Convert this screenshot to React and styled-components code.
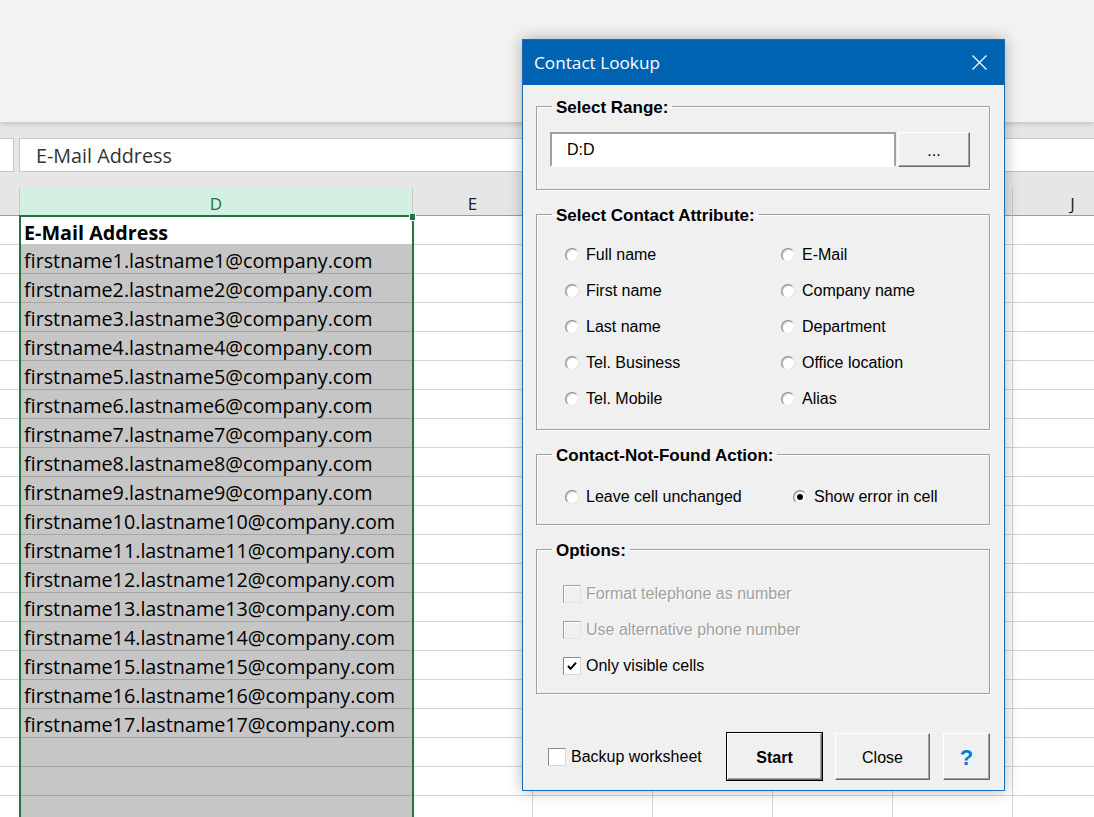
import React from 'react';
import styled, { createGlobalStyle } from 'styled-components';

const GlobalStyle = createGlobalStyle`
  html, body {
    margin: 0;
    padding: 0;
  }
  body {
    width: 1094px;
    height: 817px;
    overflow: hidden;
    background: #fff;
    font-family: "Open Sans", "Liberation Sans", sans-serif;
  }
  * {
    box-sizing: border-box;
  }
`;

const COLUMNS = [
  { key: 'C', width: 20, label: '' },
  { key: 'D', width: 393, label: 'D' },
  { key: 'E', width: 120, label: 'E' },
  { key: 'F', width: 120, label: 'F' },
  { key: 'G', width: 120, label: 'G' },
  { key: 'H', width: 120, label: 'H' },
  { key: 'I', width: 120, label: 'I' },
  { key: 'J', width: 120, label: 'J' },
];

const ROW_COUNT = 21;

const EMAILS = Array.from(
  { length: 17 },
  (_, i) => `firstname${i + 1}.lastname${i + 1}@company.com`
);

const ATTRIBUTES = [
  ['Full name', 'E-Mail'],
  ['First name', 'Company name'],
  ['Last name', 'Department'],
  ['Tel. Business', 'Office location'],
  ['Tel. Mobile', 'Alias'],
];

const OPTIONS = [
  { label: 'Format telephone as number', disabled: true, checked: false },
  { label: 'Use alternative phone number', disabled: true, checked: false },
  { label: 'Only visible cells', disabled: false, checked: true },
];

const App = () => {
  return (
    <>
      <GlobalStyle />
      <Screen>
        <Ribbon />
        <FormulaBar>
          <NameBox />
          <FormulaInput>E-Mail Address</FormulaInput>
        </FormulaBar>

        <Sheet>
          {COLUMNS.map((col) =>
            col.key === 'D' ? (
              <Column key={col.key} $width={col.width}>
                <HeaderCell $active>{col.label}</HeaderCell>
                <Selection>
                  <Handle />
                  {Array.from({ length: ROW_COUNT }, (_, r) => (
                    <SelectedCell key={r} $first={r === 0}>
                      {r === 0 ? <b>E-Mail Address</b> : EMAILS[r - 1] || ''}
                    </SelectedCell>
                  ))}
                </Selection>
              </Column>
            ) : (
              <Column key={col.key} $width={col.width}>
                <HeaderCell>{col.label}</HeaderCell>
                {Array.from({ length: ROW_COUNT }, (_, r) => (
                  <Cell key={r} />
                ))}
              </Column>
            )
          )}
        </Sheet>

        <Dialog>
          <TitleBar>
            <Title>Contact Lookup</Title>
            <svg width="15" height="15" viewBox="0 0 15 15">
              <path d="M0.5 0.5 L14.5 14.5 M14.5 0.5 L0.5 14.5" stroke="#fff" strokeWidth="1.2" />
            </svg>
          </TitleBar>

          <DialogBody>
            <Frame>
              <Legend>Select Range:</Legend>
              <FrameBody $pad="15px 0 22px 13px">
                <RangeRow>
                  <TextBox>D:D</TextBox>
                  <Button $w={72} $h={35}>...</Button>
                </RangeRow>
              </FrameBody>
            </Frame>

            <Frame>
              <Legend>Select Contact Attribute:</Legend>
              <FrameBody $pad="12px 0 12px 28px">
                <ChoiceGrid $col={216}>
                  {ATTRIBUTES.flat().map((label) => (
                    <Choice key={label}>
                      <Radio />
                      {label}
                    </Choice>
                  ))}
                </ChoiceGrid>
              </FrameBody>
            </Frame>

            <Frame>
              <Legend>Contact-Not-Found Action:</Legend>
              <FrameBody $pad="14px 0 9px 28px">
                <ChoiceGrid $col={228}>
                  <Choice>
                    <Radio />
                    Leave cell unchanged
                  </Choice>
                  <Choice>
                    <Radio $checked />
                    Show error in cell
                  </Choice>
                </ChoiceGrid>
              </FrameBody>
            </Frame>

            <Frame>
              <Legend>Options:</Legend>
              <FrameBody $pad="16px 0 9px 26px">
                {OPTIONS.map((opt) => (
                  <CheckRow key={opt.label} $disabled={opt.disabled}>
                    <CheckBox $disabled={opt.disabled}>
                      {opt.checked && (
                        <svg width="12" height="12" viewBox="0 0 12 12">
                          <path d="M2 6 L4.6 8.8 L10 2.6" fill="none" stroke="#000" strokeWidth="2" />
                        </svg>
                      )}
                    </CheckBox>
                    {opt.label}
                  </CheckRow>
                ))}
              </FrameBody>
            </Frame>

            <Footer>
              <CheckRow>
                <CheckBox />
                Backup worksheet
              </CheckRow>
              <ButtonGroup>
                <Button $w={95} $default>Start</Button>
                <Button $w={95}>Close</Button>
                <Button $w={47} $help>?</Button>
              </ButtonGroup>
            </Footer>
          </DialogBody>
        </Dialog>
      </Screen>
    </>
  );
};

export default App;

// spreadsheet
const Screen = styled.div`
  position: relative;
  width: 1094px;
  height: 817px;
  overflow: hidden;
  display: flex;
  flex-direction: column;
`;

const Ribbon = styled.div`
  height: 122px;
  flex-shrink: 0;
  background: #f3f2f1;
  box-shadow: 0 2px 5px rgba(0, 0, 0, 0.16);
  position: relative;
  z-index: 1;
`;

const FormulaBar = styled.div`
  height: 66px;
  flex-shrink: 0;
  display: flex;
  align-items: flex-start;
  gap: 5px;
  padding-top: 16px;
  background: #e6e6e6;
`;

const NameBox = styled.div`
  width: 14px;
  height: 34px;
  background: #fff;
  border: 1px solid #c6c6c6;
  border-left: none;
`;

const FormulaInput = styled.div`
  flex: 1;
  height: 34px;
  background: #fff;
  border: 1px solid #c6c6c6;
  border-right: none;
  padding: 1px 0 0 16px;
  font-size: 19.75px;
  line-height: 32px;
  color: #333;
`;

const Sheet = styled.div`
  flex: 1;
  display: flex;
  overflow: hidden;
`;

const Column = styled.div`
  width: ${(p) => p.$width}px;
  flex-shrink: 0;
  display: flex;
  flex-direction: column;
`;

const HeaderCell = styled.div`
  height: 28px;
  flex-shrink: 0;
  background: ${(p) => (p.$active ? '#d3f0e0' : '#e6e6e6')};
  border-right: 1px solid #c8c8c8;
  border-bottom: 1px solid #9b9b9b;
  text-align: center;
  font-size: 17px;
  line-height: 32px;
  color: ${(p) => (p.$active ? '#217346' : '#222')};
`;

const Cell = styled.div`
  height: 29px;
  flex-shrink: 0;
  border-right: 1px solid #d4d4d4;
  border-bottom: 1px solid #d4d4d4;
`;

const Selection = styled.div`
  position: relative;
  margin: -1px -1px 0;
  border: 2px solid #217346;
  border-bottom: none;
  display: flex;
  flex-direction: column;
`;

const Handle = styled.div`
  position: absolute;
  top: -3px;
  right: -4px;
  width: 7px;
  height: 7px;
  background: #217346;
  border: 1px solid #fff;
  border-top: none;
`;

const SelectedCell = styled.div`
  height: ${(p) => (p.$first ? 28 : 29)}px;
  flex-shrink: 0;
  padding: 1px 0 0 3px;
  background: ${(p) => (p.$first ? '#fff' : '#c6c6c6')};
  border-bottom: 1px solid ${(p) => (p.$first ? '#c8c8c8' : '#a6a6a6')};
  font-size: 19.75px;
  line-height: 30px;
  color: #000;
  white-space: nowrap;
`;

// dialog
const Dialog = styled.div`
  position: absolute;
  left: 522px;
  top: 39px;
  width: 483px;
  height: 752px;
  display: flex;
  flex-direction: column;
  background: #f0f0f0;
  border: 1px solid #1a6cb5;
  box-shadow: 0 0 14px rgba(0, 0, 0, 0.3);
  z-index: 5;
  font-family: "Liberation Sans", Arial, sans-serif;
  font-size: 16px;
  color: #000;
`;

const TitleBar = styled.div`
  height: 45px;
  flex-shrink: 0;
  display: flex;
  align-items: center;
  justify-content: space-between;
  padding: 0 17px 1px 11px;
  background: #0063b1;
`;

const Title = styled.span`
  font-family: "Open Sans", "Noto Sans", sans-serif;
  font-size: 17.2px;
  color: #fff;
`;

const DialogBody = styled.div`
  flex: 1;
  display: flex;
  flex-direction: column;
  gap: 13px;
  padding: 10px 14px 0 13px;
`;

const Frame = styled.fieldset`
  margin: 0;
  padding: 0;
  min-width: 0;
  border: 1px solid #a0a0a0;
  box-shadow: inset 1px 1px 0 #fff, 1px 1px 0 #fff;
`;

const Legend = styled.legend`
  margin-left: 15px;
  padding: 4px 4px 0;
  font-size: 17px;
  font-weight: bold;
  line-height: 18px;
`;

const FrameBody = styled.div`
  padding: ${(p) => p.$pad};
`;

const RangeRow = styled.div`
  display: flex;
  gap: 2px;
`;

const TextBox = styled.div`
  width: 346px;
  height: 35px;
  padding-left: 15px;
  background: #fff;
  border: 2px solid;
  border-color: #a0a0a0 #a0a0a0 #fff #a0a0a0;
  line-height: 31px;
`;

const Button = styled.div`
  width: ${(p) => p.$w}px;
  height: ${(p) => p.$h || 47}px;
  display: flex;
  align-items: center;
  justify-content: center;
  background: #f0f0f0;
  border: 1px solid;
  border-color: #fff #696969 #696969 #fff;
  box-shadow: ${(p) =>
    p.$default
      ? 'inset -1px -1px 0 #a0a0a0, 0 0 0 1px #000'
      : 'inset -1px -1px 0 #a0a0a0'};
  font-size: ${(p) => (p.$help ? '22px' : '16px')};
  font-weight: ${(p) => (p.$default || p.$help ? 'bold' : 'normal')};
  color: ${(p) => (p.$help ? '#0078d7' : '#000')};
  padding-top: 2px;
`;

const ChoiceGrid = styled.div`
  display: grid;
  grid-template-columns: ${(p) => p.$col}px 1fr;
  grid-auto-rows: 36px;
`;

const Choice = styled.label`
  display: flex;
  align-items: center;
  gap: 7px;
  white-space: nowrap;
`;

const Radio = styled.span`
  position: relative;
  width: 14px;
  height: 14px;
  flex-shrink: 0;
  border-radius: 50%;
  background: #fff;
  border: 1px solid;
  border-color: #8a8a8a #e6e6e6 #e6e6e6 #8a8a8a;
  box-shadow: inset 1px 1px 0 #c4c4c4;

  &::after {
    content: '';
    display: ${(p) => (p.$checked ? 'block' : 'none')};
    position: absolute;
    left: 3px;
    top: 3px;
    width: 6px;
    height: 6px;
    border-radius: 50%;
    background: #000;
  }
`;

const CheckRow = styled.label`
  height: 36px;
  display: flex;
  align-items: center;
  gap: 5px;
  white-space: nowrap;
  color: ${(p) => (p.$disabled ? '#a0a0a0' : '#000')};
  text-shadow: ${(p) => (p.$disabled ? '1px 1px 0 #fff' : 'none')};
`;

const CheckBox = styled.span`
  width: 18px;
  height: 18px;
  flex-shrink: 0;
  display: flex;
  align-items: center;
  justify-content: center;
  background: ${(p) => (p.$disabled ? '#f0f0f0' : '#fff')};
  border: 1px solid;
  border-color: ${(p) =>
    p.$disabled ? '#a0a0a0 #e3e3e3 #e3e3e3 #a0a0a0' : '#8a8a8a #d8d8d8 #d8d8d8 #8a8a8a'};
  box-shadow: ${(p) => (p.$disabled ? 'inset 1px 1px 0 #fff' : 'none')};
`;

const Footer = styled.div`
  margin-top: auto;
  display: flex;
  align-items: center;
  padding: 0 0 10px 12px;
`;

const ButtonGroup = styled.div`
  margin-left: auto;
  display: flex;
  gap: 13px;
`;
